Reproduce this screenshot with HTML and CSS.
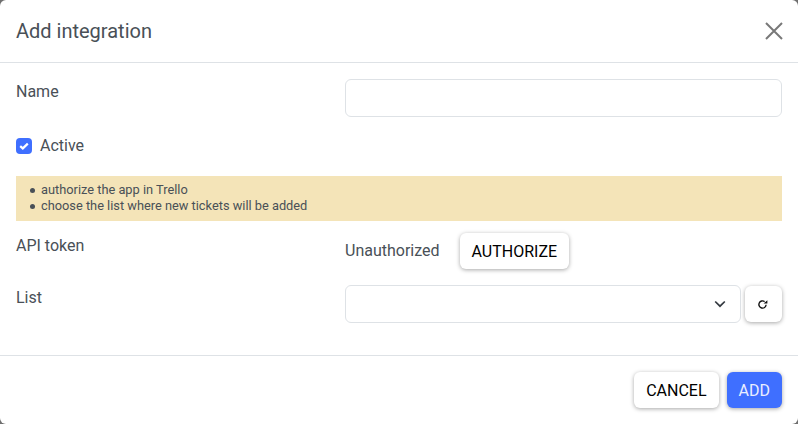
FILE: index.html
```html
<!DOCTYPE html>
<html>
	<head>
		<meta charset="UTF-8">
		<title>Add integration</title>
		<link rel="stylesheet" href="styles.css">
	</head>
	<body>
		<div class="modal">
			<div class="modal-head">
				<h2 class="modal-title">Add integration</h2>
				<svg class="close" width="18" height="18" viewBox="0 0 18 18"><path d="M1 1L17 17M17 1L1 17" fill="none" stroke="#787878" stroke-width="2"/></svg>
			</div>
			<div class="modal-body">
				<div class="row row-name">
					<label class="label">Name</label>
					<div class="input"></div>
				</div>
				<div class="check">
					<span class="checkbox">
						<svg width="10" height="8" viewBox="0 0 10 8"><path d="M1.2 4.2L3.8 6.4L8.8 1.6" fill="none" stroke="#fff" stroke-width="2.2"/></svg>
					</span>
					<span>Active</span>
				</div>
				<ul class="notice">
					<li>authorize the app in Trello</li>
					<li>choose the list where new tickets will be added</li>
				</ul>
				<div class="row row-token">
					<label class="label">API token</label>
					<div class="token">
						<span>Unauthorized</span>
						<button class="btn">AUTHORIZE</button>
					</div>
				</div>
				<div class="row">
					<label class="label">List</label>
					<div class="list-field">
						<div class="input select">
							<svg width="12" height="8" viewBox="0 0 12 8"><path d="M1.2 1.5L6 6.2L10.8 1.5" fill="none" stroke="#343a40" stroke-width="1.7"/></svg>
						</div>
						<button class="btn btn-icon">
							<svg width="11" height="11" viewBox="0 0 11 11"><path d="M7.6 2.6A3.6 3.6 0 1 0 9.1 5.8" fill="none" stroke="#111" stroke-width="1.4"/><path d="M6.6 4.4H10.4V1.2Z" fill="#111"/></svg>
						</button>
					</div>
				</div>
			</div>
			<div class="modal-foot">
				<button class="btn">CANCEL</button>
				<button class="btn btn-primary">ADD</button>
			</div>
		</div>
	</body>
</html>
```

FILE: styles.css
```css
*{
	margin: 0;
	padding: 0;
	box-sizing: border-box;
}
html,body{
	height: 100%;
}
body{
	background-color: #6f6f6f;
	font-family: Roboto, "Liberation Sans", sans-serif;
	font-size: 16px;
	line-height: 24px;
	color: #495057;
}
.modal{
	height: 424px;
	background-color: #fff;
	border-radius: 6px;
	overflow: hidden;
}
.modal-head{
	height: 63px;
	padding: 0 16px;
	display: flex;
	align-items: center;
	justify-content: space-between;
	border-bottom: 1px solid #dee2e6;
}
.modal-title{
	font-size: 20px;
	font-weight: 400;
	line-height: 30px;
}
.close{
	margin-right: -1px;
}
.modal-body{
	height: 293px;
	padding: 16px;
	border-bottom: 1px solid #dee2e6;
}
.row{
	display: grid;
	grid-template-columns: 329px 437px;
}
.row-name{
	height: 38px;
}
.label{
	display: block;
	padding-top: 1px;
}
.input{
	height: 38px;
	border: 1px solid #dee2e6;
	border-radius: 6px;
	background-color: #fff;
}
.check{
	display: flex;
	align-items: center;
	gap: 8px;
	margin-top: 17px;
	height: 24px;
}
.checkbox{
	width: 16px;
	height: 16px;
	border-radius: 4px;
	background-color: #3f6fff;
	display: flex;
	align-items: center;
	justify-content: center;
}
.notice{
	margin-top: 18px;
	height: 45px;
	padding: 6px 0 0 14px;
	background-color: #f4e4b8;
	font-size: 12.8px;
	line-height: 16px;
	list-style: none;
}
.notice li{
	display: flex;
	align-items: center;
}
.notice li::before{
	content: "";
	width: 5px;
	height: 5px;
	margin-right: 6px;
	border-radius: 50%;
	background-color: #495057;
}
.row-token{
	margin-top: 12px;
	margin-bottom: 16px;
	height: 36px;
}
.token{
	display: flex;
	align-items: center;
	gap: 20px;
}
.btn{
	height: 36px;
	padding: 0 12px;
	border: 0;
	border-radius: 6px;
	background-color: #fff;
	color: #000;
	font-family: inherit;
	font-size: 16px;
	box-shadow: 0 1px 4px rgba(0,0,0,.35);
}
.btn-primary{
	background-color: #3f6fff;
	color: #e9eeff;
}
.list-field{
	display: flex;
	align-items: center;
	gap: 4px;
}
.select{
	width: 396px;
	display: flex;
	align-items: center;
	justify-content: flex-end;
	padding-right: 14px;
}
.btn-icon{
	width: 37px;
	padding: 0 3px 0 0;
	display: flex;
	align-items: center;
	justify-content: center;
}
.modal-foot{
	padding: 16px;
	display: flex;
	justify-content: flex-end;
	gap: 8px;
}
```
